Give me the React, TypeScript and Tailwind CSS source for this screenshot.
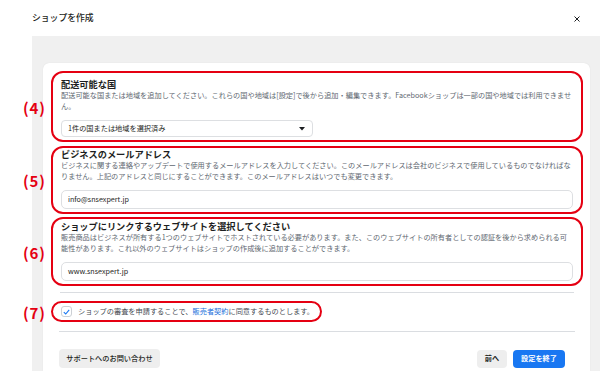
import React from "react";

const FONT = { fontFamily: '"Noto Sans CJK JP", "Noto Sans", sans-serif' };

function Label({ n }: { n: string }) {
  return (
    <div className="absolute left-[-30px] top-1/2 -translate-y-1/2 text-[15px] font-bold leading-none tracking-[0.8px] text-[#e50012]">
      ({n})
    </div>
  );
}

export default function App() {
  return (
    <div className="flex h-[371px] w-[600px] flex-col overflow-hidden bg-white text-[#1c1e21]" style={FONT}>
      <div className="flex h-[36px] shrink-0 items-center justify-between pl-[32px] pr-[20px]">
        <div className="text-[8.8px] font-medium leading-none">ショップを作成</div>
        <svg width="6" height="6" viewBox="0 0 6 6" className="mt-[1px]">
          <path d="M0.5 0.5 L5.5 5.5 M5.5 0.5 L0.5 5.5" stroke="#1c1e21" strokeWidth="1" />
        </svg>
      </div>
      <div className="ml-[32px] flex-1 bg-[#f0f0f0] pl-[11px] pr-[10px] pt-[27px]">
        <div className="h-full rounded-t-[6px] bg-white pl-[8px] pr-[7px] pt-[8px] shadow-[0_0_1px_rgba(0,0,0,0.12)]">
          {/* (4) */}
          <div className="relative rounded-[12px] border-2 border-[#e50012] px-[8px] pb-[3px] pt-[6px]">
            <Label n="4" />
            <div className="whitespace-nowrap text-[9.2px] font-bold leading-[11px]">配送可能な国</div>
            <div className="whitespace-nowrap text-[7.2px] leading-[11px] text-[#606770]">
              配送可能な国または地域を追加してください。これらの国や地域は[設定]で後から追加・編集できます。Facebookショップは一部の国や地域では利用できませ
              <br />
              ん。
            </div>
            <div className="mt-[8px] flex h-[17px] w-[252px] items-center justify-between rounded-[4px] border border-[#dddfe2] bg-white pl-[6px] pr-[7px]">
              <span className="text-[7.2px] leading-none">1件の国または地域を選択済み</span>
              <svg width="6" height="4" viewBox="0 0 6 4">
                <path d="M0 0 L6 0 L3 3.5 Z" fill="#1c1e21" />
              </svg>
            </div>
          </div>

          {/* (5) */}
          <div className="relative mt-[4px] rounded-[12px] border-2 border-[#e50012] px-[8px] pb-[3px] pt-[1px]">
            <Label n="5" />
            <div className="whitespace-nowrap text-[9.2px] font-bold leading-[11px]">ビジネスのメールアドレス</div>
            <div className="whitespace-nowrap text-[7.2px] leading-[11px] text-[#606770]">
              ビジネスに関する連絡やアップデートで使用するメールアドレスを入力してください。このメールアドレスは会社のビジネスで使用しているものでなければな
              <br />
              りません。上記のアドレスと同じにすることができます。このメールアドレスはいつでも変更できます。
            </div>
            <div className="mt-[8px] flex h-[19px] items-center rounded-[5px] border border-[#dddfe2] bg-white pl-[6px]">
              <span className="text-[7.2px] leading-none">info@snsexpert.jp</span>
            </div>
          </div>

          {/* (6) */}
          <div className="relative mt-[3px] rounded-[12px] border-2 border-[#e50012] px-[8px] pb-[3px] pt-[2px]">
            <Label n="6" />
            <div className="whitespace-nowrap text-[9.2px] font-bold leading-[11px]">ショップにリンクするウェブサイトを選択してください</div>
            <div className="whitespace-nowrap text-[7.2px] leading-[11px] text-[#606770]">
              販売商品はビジネスが所有する1つのウェブサイトでホストされている必要があります。また、このウェブサイトの所有者としての認証を後から求められる可
              <br />
              能性があります。これ以外のウェブサイトはショップの作成後に追加することができます。
            </div>
            <div className="mt-[8px] flex h-[19px] items-center rounded-[5px] border border-[#dddfe2] bg-white pl-[6px]">
              <span className="text-[7.2px] leading-none">www.snsexpert.jp</span>
            </div>
          </div>

          <div className="mx-[9px] mt-[6px] h-px bg-[#dadde1]" />

          {/* (7) */}
          <div className="relative mt-[8px] flex h-[21px] w-[271px] items-center gap-[6px] rounded-[11px] border-2 border-[#e50012] pl-[8px]">
            <Label n="7" />
            <div className="flex h-[11px] w-[11px] items-center justify-center rounded-[3px] border border-[#ccd0d5] bg-white">
              <svg width="7" height="6" viewBox="0 0 7 6">
                <path d="M0.8 3.2 L2.7 5 L6.2 0.8" stroke="#1877f2" strokeWidth="1.1" fill="none" />
              </svg>
            </div>
            <span className="whitespace-nowrap text-[7.2px] leading-none text-[#444950]">
              ショップの審査を申請することで、<span className="text-[#216fdb]">販売者契約</span>に同意するものとします。
            </span>
          </div>

          <div className="mx-[8px] mt-[9px] h-px bg-[#dadde1]" />

          <div className="ml-[8px] mr-[18px] mt-[17px] flex items-center justify-between">
            <div className="flex h-[19px] w-[101px] items-center justify-center rounded-[4px] bg-[#eeeeee] text-[7.2px] font-medium leading-none">
              サポートへのお問い合わせ
            </div>
            <div className="flex items-center gap-[6px]">
              <div className="flex h-[18px] w-[30px] items-center justify-center rounded-[4px] bg-[#eeeeee] text-[7.2px] font-bold leading-none">
                前へ
              </div>
              <div className="flex h-[18px] w-[52px] items-center justify-center rounded-[4px] bg-[#1877f2] text-[7.2px] font-bold leading-none text-white">
                設定を終了
              </div>
            </div>
          </div>
        </div>
      </div>
    </div>
  );
}
